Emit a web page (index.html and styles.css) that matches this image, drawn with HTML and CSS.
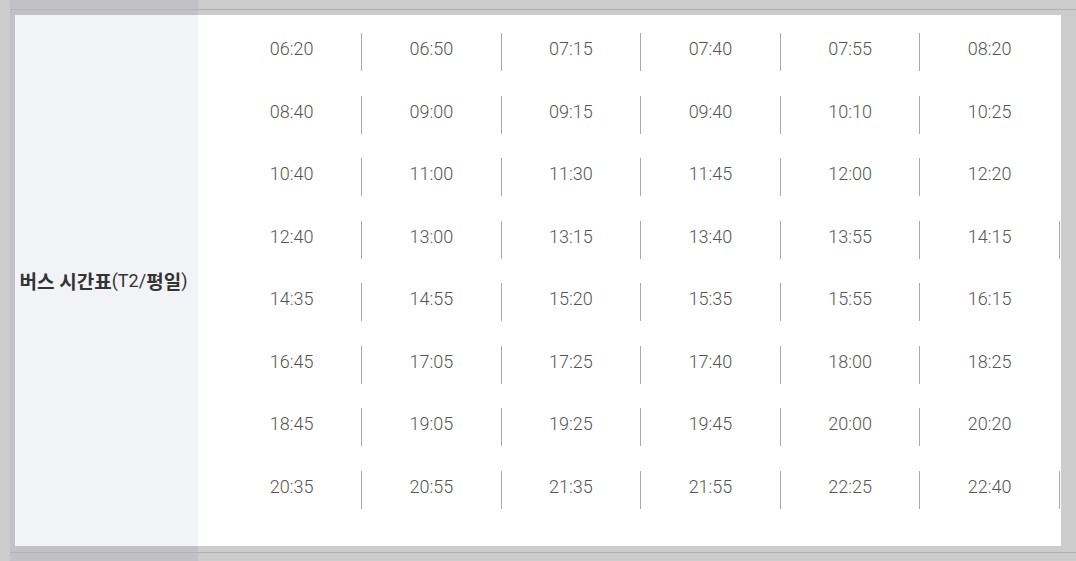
FILE: index.html
```html
<!DOCTYPE html>
<html lang="ko">
<head>
<meta charset="utf-8">
<title>버스 시간표</title>
<link rel="stylesheet" href="styles.css">
</head>
<body>
<div class="page">
  <div class="frame">
    <div class="panel">
      <div class="label"><b>버스 시간표</b>(T2/<b>평일</b>)</div>
      <div class="times">
        <div class="row">
          <span class="t">06:20</span><span class="t">06:50</span><span class="t">07:15</span><span class="t">07:40</span><span class="t">07:55</span><span class="t">08:20</span>
        </div>
        <div class="row">
          <span class="t">08:40</span><span class="t">09:00</span><span class="t">09:15</span><span class="t">09:40</span><span class="t">10:10</span><span class="t">10:25</span>
        </div>
        <div class="row">
          <span class="t">10:40</span><span class="t">11:00</span><span class="t">11:30</span><span class="t">11:45</span><span class="t">12:00</span><span class="t">12:20</span>
        </div>
        <div class="row">
          <span class="t">12:40</span><span class="t">13:00</span><span class="t">13:15</span><span class="t">13:40</span><span class="t">13:55</span><span class="t end">14:15</span>
        </div>
        <div class="row">
          <span class="t">14:35</span><span class="t">14:55</span><span class="t">15:20</span><span class="t">15:35</span><span class="t">15:55</span><span class="t">16:15</span>
        </div>
        <div class="row">
          <span class="t">16:45</span><span class="t">17:05</span><span class="t">17:25</span><span class="t">17:40</span><span class="t">18:00</span><span class="t">18:25</span>
        </div>
        <div class="row">
          <span class="t">18:45</span><span class="t">19:05</span><span class="t">19:25</span><span class="t">19:45</span><span class="t">20:00</span><span class="t">20:20</span>
        </div>
        <div class="row">
          <span class="t">20:35</span><span class="t">20:55</span><span class="t">21:35</span><span class="t">21:55</span><span class="t">22:25</span><span class="t end">22:40</span>
        </div>
      </div>
    </div>
  </div>
</div>
</body>
</html>
```
FILE: styles.css
```css
html, body {
  margin: 0;
  padding: 0;
}
body {
  width: 1076px;
  height: 561px;
  overflow: hidden;
  background: linear-gradient(to right, #cccccc 0 10px, #c2c2c6 10px 198px, #cccccc 198px);
  font-family: Roboto, "Noto Sans CJK KR", sans-serif;
}
.page {
  padding-top: 9px;
  padding-left: 10px;
}
.frame {
  border-top: 1px solid #b2b2b4;
  border-bottom: 1px solid #b2b2b4;
  padding: 5px 15px 6px 5px;
}
.panel {
  display: flex;
  background: #ffffff;
}
.label {
  width: 183px;
  flex: none;
  background: #f2f3f7;
  display: flex;
  align-items: center;
  justify-content: center;
  font-size: 18px;
  color: #333333;
  font-weight: 400;
  white-space: nowrap;
  padding: 1px 6px 0 0;
  box-sizing: border-box;
}
.label b {
  font-weight: 700;
  font-size: 19px;
}
.times {
  flex: 1;
  padding: 18px 1px 37px 24.4px;
  display: flex;
  flex-direction: column;
  gap: 24.5px;
}
.row {
  display: grid;
  grid-template-columns: repeat(6, 1fr);
}
.t {
  box-sizing: border-box;
  height: 38px;
  line-height: 32px;
  text-align: center;
  font-size: 18px;
  font-weight: 300;
  color: #555555;
  border-right: 1px solid #a9a9a9;
}
.t:last-child {
  border-right-color: transparent;
}
.t.end:last-child {
  border-right-color: #a9a9a9;
}
```
